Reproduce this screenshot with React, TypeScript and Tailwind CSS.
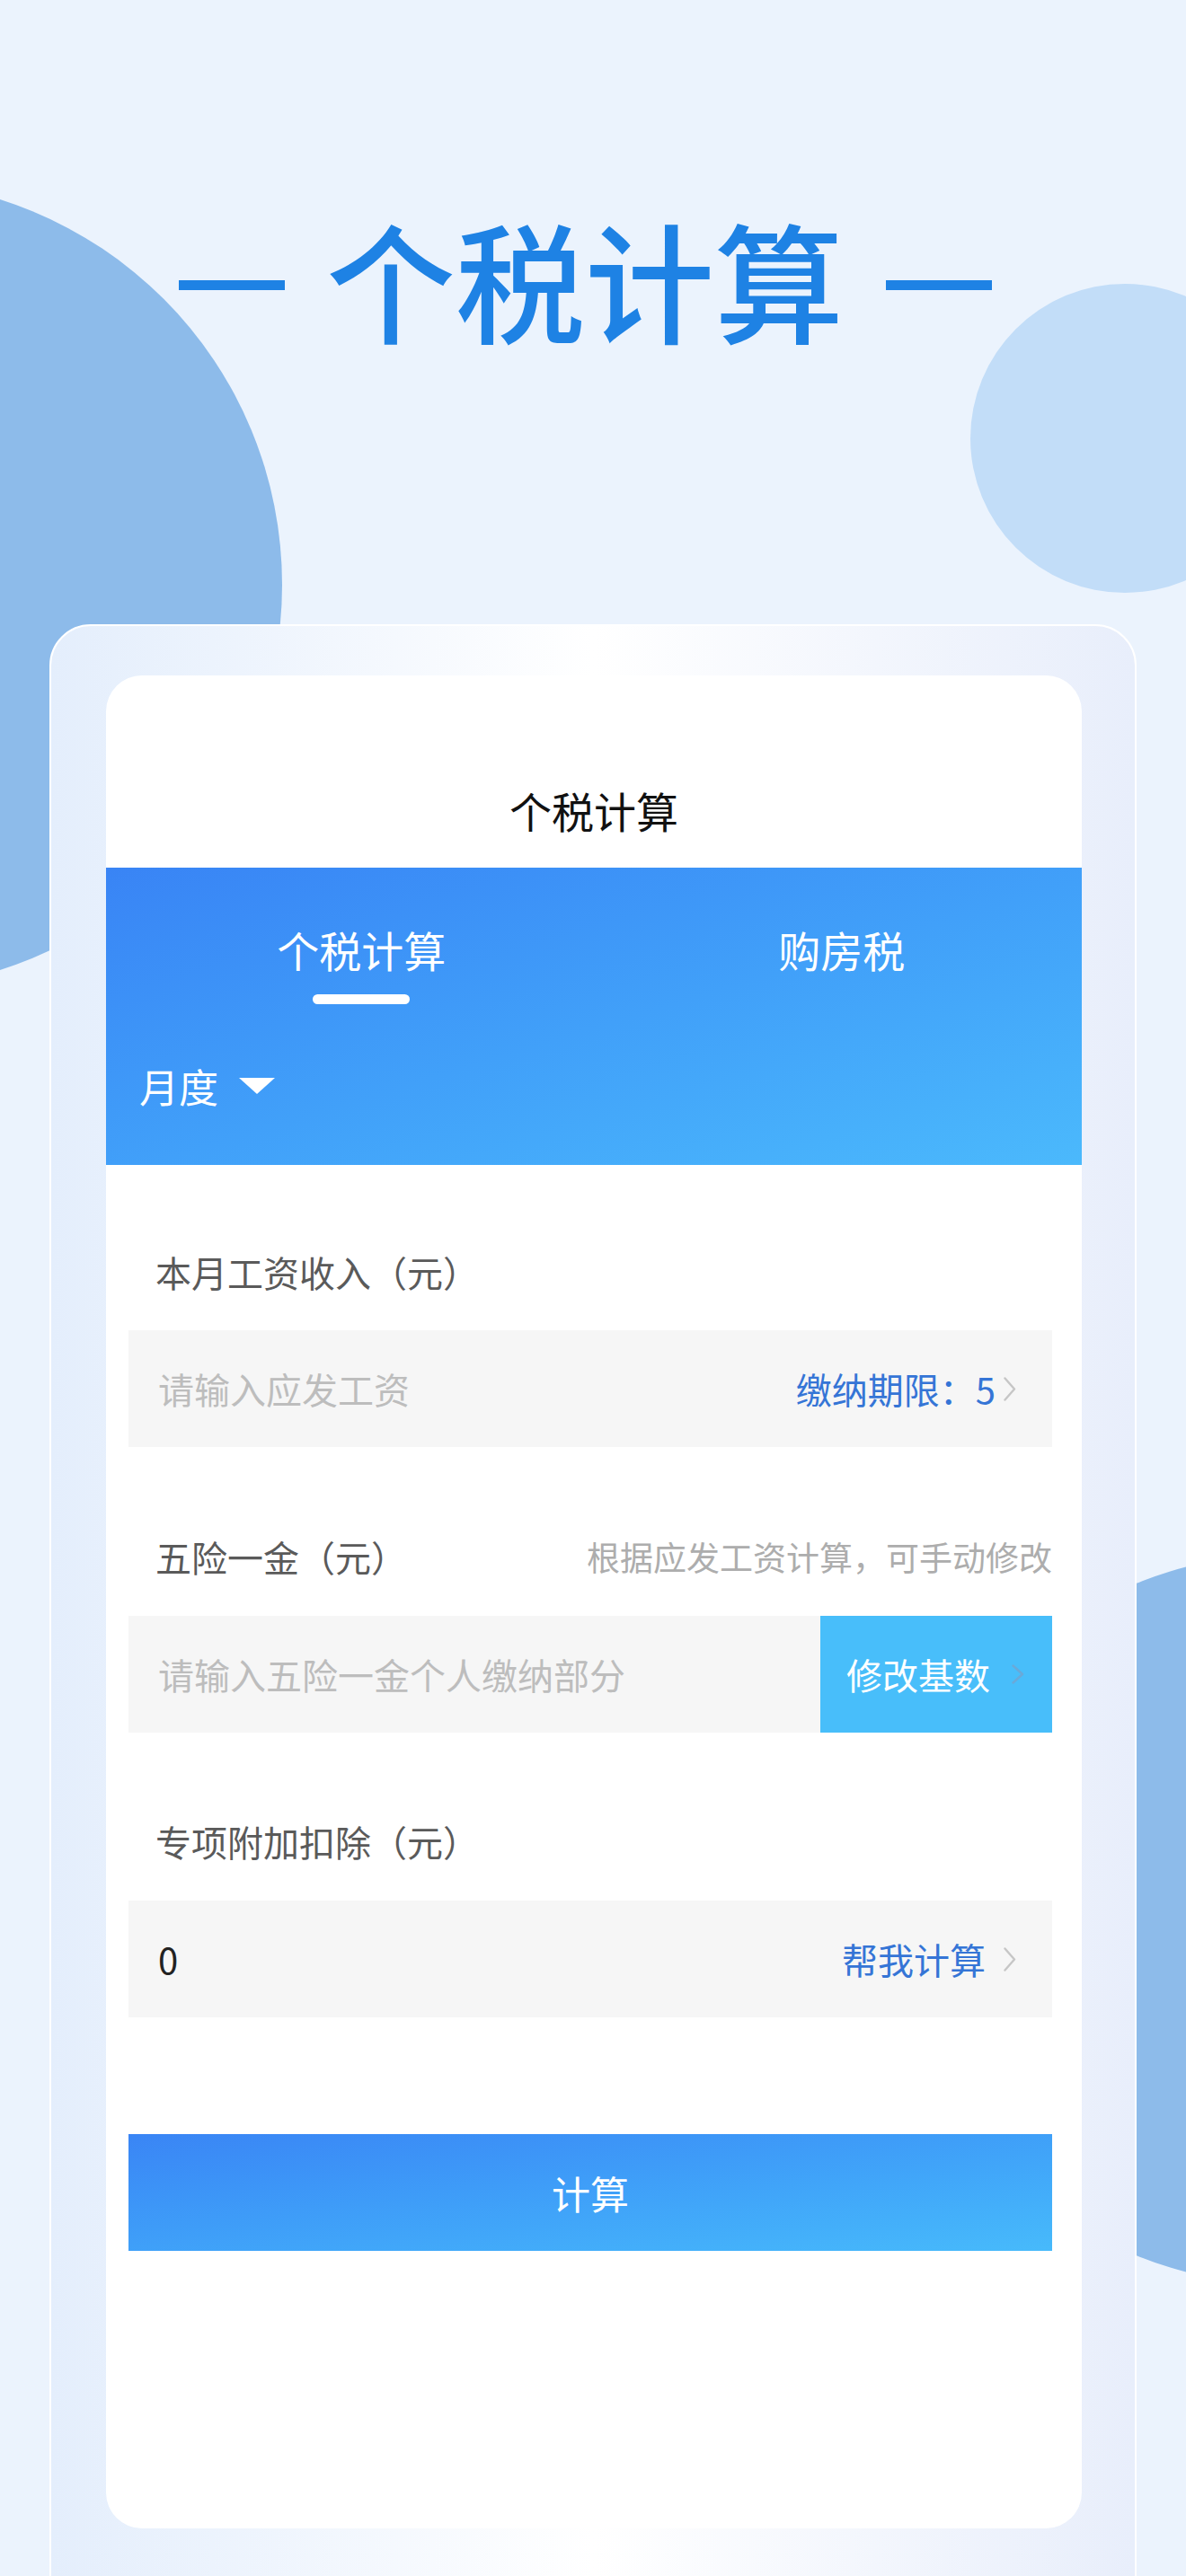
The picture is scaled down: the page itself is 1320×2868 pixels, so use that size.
import React from "react";

function Chevron({
  className = "",
  color = "#C6C6C6",
  w = 14,
  h = 27,
}: {
  className?: string;
  color?: string;
  w?: number;
  h?: number;
}) {
  return (
    <svg
      width={w}
      height={h}
      viewBox={`0 0 ${w} ${h}`}
      fill="none"
      className={className}
    >
      <polyline
        points={`1.5,1.5 ${w - 2},${h / 2} 1.5,${h - 1.5}`}
        stroke={color}
        strokeWidth="2.4"
        strokeLinecap="round"
        strokeLinejoin="round"
      />
    </svg>
  );
}

export default function App() {
  return (
    <div className="relative w-[1320px] h-[2868px] overflow-hidden bg-[#EBF3FD] font-['Noto_Sans_CJK_SC','Noto_Sans',sans-serif]">
      {/* decorative circles */}
      <div className="absolute left-[-586px] top-[201px] w-[900px] h-[900px] rounded-full bg-[#8DBBEA]" />
      <div className="absolute left-[1080px] top-[316px] w-[344px] h-[344px] rounded-full bg-[#C2DDF8]" />
      <div className="absolute left-[1015px] top-[1732px] w-[810px] h-[810px] rounded-full bg-[#8DBBEA]" />

      <div className="relative">
        {/* Big title */}
        <div className="flex items-center justify-center pt-[237px] pr-[17px]">
          <div className="mt-[17px] w-[118px] h-[11px] bg-[#1E82E4]" />
          <div className="ml-[46px] text-[144px] leading-[144px] font-medium text-[#1E82E4]">
            个税计算
          </div>
          <div className="ml-[47px] mt-[17px] w-[118px] h-[11px] bg-[#1E82E4]" />
        </div>

        {/* Frame */}
        <div className="ml-[55px] mt-[314px] w-[1210px] h-[2300px] rounded-t-[46px] border-2 border-white bg-linear-to-r from-[#E4EEFC] via-[#FFFFFF] to-[#E8EEFB] pt-[55px] pl-[61px] pr-[59px]">
          {/* Card */}
          <div className="rounded-[40px] bg-white overflow-hidden">
            {/* Card title */}
            <div className="h-[214px] pt-[120px] text-center text-[47px] leading-[60px] text-[#111111]">
              个税计算
            </div>

            {/* Blue band */}
            <div className="h-[331px] bg-linear-to-br from-[#3984F5] to-[#4BB9FC] pt-[61px]">
              <div className="flex pl-[17px]">
                <div className="flex-1 flex flex-col items-center">
                  <div className="text-[47px] leading-[60px] text-white">个税计算</div>
                  <div className="mt-[20px] w-[108px] h-[11px] rounded-full bg-white" />
                </div>
                <div className="flex-1 flex flex-col items-center">
                  <div className="text-[47px] leading-[60px] text-white">购房税</div>
                </div>
              </div>
              <div className="mt-[61px] pl-[37px] flex items-center">
                <span className="text-[44px] leading-[60px] text-white">月度</span>
                <svg className="ml-[23px]" width="40" height="18" viewBox="0 0 40 18">
                  <polygon points="0,0 40,0 20,18" fill="#FFFFFF" />
                </svg>
              </div>
            </div>

            {/* Form */}
            <div className="pl-[25px] pr-[33px] pt-[94px] pb-[309px]">
              {/* Section 1 */}
              <div className="pl-[30px] text-[40px] leading-[50px] text-[#5A5A5A]">
                本月工资收入（元）
              </div>
              <div className="mt-[40px] h-[130px] bg-[#F6F6F6] flex items-center pl-[33px] pr-[40px]">
                <span className="flex-1 text-[40px] leading-[50px] text-[#BDBDBD]">请输入应发工资</span>
                <span className="text-[40px] leading-[50px] text-[#3575D6]">缴纳期限：5</span>
                <Chevron className="ml-[9px]" />
              </div>

              {/* Section 2 */}
              <div className="mt-[97px] flex items-center justify-between">
                <span className="pl-[30px] text-[40px] leading-[50px] text-[#5A5A5A]">五险一金（元）</span>
                <span className="text-[37px] leading-[50px] text-[#ADADAD]">根据应发工资计算，可手动修改</span>
              </div>
              <div className="mt-[41px] h-[130px] bg-[#F6F6F6] flex">
                <div className="flex-1 flex items-center pl-[33px] text-[40px] leading-[50px] text-[#BDBDBD]">
                  请输入五险一金个人缴纳部分
                </div>
                <div className="w-[258px] bg-[#48BEFA] flex items-center pl-[29px]">
                  <span className="text-[40px] leading-[50px] text-white">修改基数</span>
                  <Chevron className="ml-[24px]" color="#6AA9D8" w={14} h={22} />
                </div>
              </div>

              {/* Section 3 */}
              <div className="mt-[96px] pl-[30px] text-[40px] leading-[50px] text-[#5A5A5A]">
                专项附加扣除（元）
              </div>
              <div className="mt-[41px] h-[130px] bg-[#F6F6F6] flex items-center pl-[33px] pr-[40px]">
                <span className="flex-1 text-[40px] leading-[50px] text-[#222222]">0</span>
                <span className="text-[40px] leading-[50px] text-[#3575D6]">帮我计算</span>
                <Chevron className="ml-[20px]" />
              </div>

              {/* Button */}
              <div className="mt-[130px] h-[130px] bg-linear-to-br from-[#3A85F5] to-[#47BAFB] flex items-center justify-center text-[43px] leading-[50px] text-white">
                计算
              </div>
            </div>
          </div>
        </div>
      </div>
    </div>
  );
}
